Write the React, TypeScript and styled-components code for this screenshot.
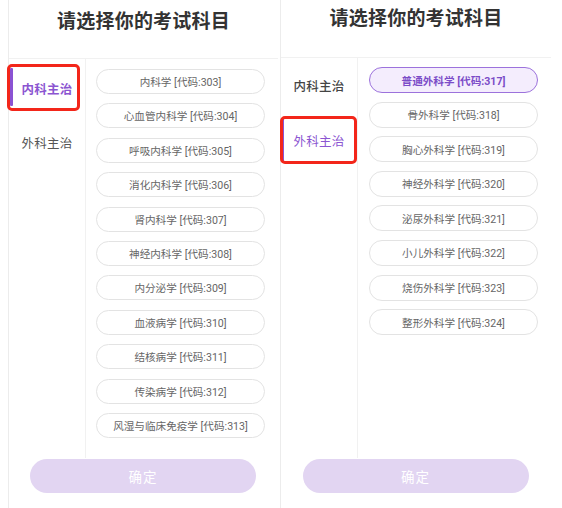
import React from "react";
import styled, { createGlobalStyle } from "styled-components";

const Global = createGlobalStyle`
  html, body { margin: 0; padding: 0; background: #ffffff; }
  body { font-family: Roboto, "Noto Sans CJK SC", "Noto Sans", sans-serif; }
  * { box-sizing: border-box; }
`;

const Page = styled.div`
  display: flex;
  width: 562px;
  height: 508px;
  overflow: hidden;
  background: #fff;
`;

const Panel = styled.div<{ $ml: number; $w: number }>`
  margin-left: ${(p) => p.$ml}px;
  width: ${(p) => p.$w}px;
  height: 508px;
  border-left: 1px solid #ececec;
  display: flex;
  flex-direction: column;
  background: #fff;
`;

const Header = styled.div<{ $h: number; $pt: number }>`
  height: ${(p) => p.$h}px;
  padding-top: ${(p) => p.$pt}px;
  border-bottom: 1px solid #f1f1f1;
  text-align: center;
  flex: none;
`;

const Title = styled.h1`
  margin: 0;
  font-size: 19px;
  line-height: 26px;
  font-weight: 700;
  color: #333;
  letter-spacing: 0.2px;
`;

const Body = styled.div<{ $h: number }>`
  display: flex;
  height: ${(p) => p.$h}px;
  flex: none;
`;

const Nav = styled.div<{ $pt: number }>`
  width: 77px;
  flex: none;
  padding-top: ${(p) => p.$pt}px;
  border-right: 1px solid #f1f1f1;
  display: flex;
  flex-direction: column;
`;

const NavItem = styled.div<{
  $h: number;
  $active: boolean;
  $activeWeight: number;
  $idleWeight: number;
  $idleColor: string;
}>`
  position: relative;
  height: ${(p) => p.$h}px;
  display: flex;
  align-items: center;
  justify-content: center;
  font-size: 12.5px;
  letter-spacing: 0.3px;
  color: ${(p) => (p.$active ? "#8b55d1" : p.$idleColor)};
  font-weight: ${(p) => (p.$active ? p.$activeWeight : p.$idleWeight)};
`;

const ActiveBar = styled.span<{ $w: number; $top: number; $bottom: number }>`
  position: absolute;
  left: 1px;
  top: ${(p) => p.$top}px;
  bottom: ${(p) => p.$bottom}px;
  width: ${(p) => p.$w}px;
  background: #8a52d3;
  border-radius: 1px;
`;

const Highlight = styled.span<{ $l: number; $t: number; $w: number; $h: number }>`
  position: absolute;
  left: ${(p) => p.$l}px;
  top: ${(p) => p.$t}px;
  width: ${(p) => p.$w}px;
  height: ${(p) => p.$h}px;
  border: 3px solid #f3261a;
  border-radius: 5px;
  pointer-events: none;
`;

const List = styled.div<{ $pt: number; $pl: number; $pr: number; $gap: number; $h: number }>`
  flex: 1;
  height: ${(p) => p.$h}px;
  overflow: hidden;
  padding: ${(p) => p.$pt}px ${(p) => p.$pr}px 0 ${(p) => p.$pl}px;
  display: flex;
  flex-direction: column;
  gap: ${(p) => p.$gap}px;
`;

const Pill = styled.div<{ $h: number; $active: boolean }>`
  flex: none;
  height: ${(p) => p.$h}px;
  border-radius: ${(p) => p.$h / 2}px;
  border: 1px solid ${(p) => (p.$active ? "#9c72dc" : "#e3e3e3")};
  background: ${(p) => (p.$active ? "#f4edfd" : "#ffffff")};
  color: ${(p) => (p.$active ? "#7b4cc8" : "#666")};
  font-weight: ${(p) => (p.$active ? 700 : 400)};
  font-size: 10.6px;
  display: flex;
  align-items: center;
  justify-content: center;
  white-space: nowrap;
`;

const Footer = styled.div<{ $pt: number; $offset: number }>`
  padding-top: ${(p) => p.$pt}px;
  display: flex;
  justify-content: center;
  padding-right: ${(p) => p.$offset}px;
`;

const ConfirmButton = styled.button`
  width: 226px;
  height: 34px;
  border: none;
  border-radius: 17px;
  background: #e2d5f2;
  color: #ffffff;
  font-family: Roboto, "Noto Sans CJK SC", sans-serif;
  font-size: 13.5px;
  letter-spacing: 1px;
  padding: 0;
`;

type Config = {
  ml: number;
  w: number;
  headerH: number;
  titlePt: number;
  bodyH: number;
  navPt: number;
  navItemH: number;
  activeNav: number;
  activeWeight: number;
  idleWeight: number;
  idleColor: string;
  bar: { w: number; top: number; bottom: number };
  box: { l: number; t: number; w: number; h: number };
  list: { pt: number; pl: number; pr: number; gap: number; h: number; pillH: number };
  items: string[];
  activeItem: number;
  footerPt: number;
  footerOffset: number;
};

const navLabels = ["内科主治", "外科主治"];

const left: Config = {
  ml: 8,
  w: 270,
  headerH: 59,
  titlePt: 9,
  bodyH: 399,
  navPt: 2,
  navItemH: 54,
  activeNav: 0,
  activeWeight: 700,
  idleWeight: 400,
  idleColor: "#555",
  bar: { w: 3, top: 7, bottom: 9 },
  box: { l: -2, t: 3, w: 73, h: 47 },
  list: { pt: 10, pl: 10, pr: 13, gap: 9.4, h: 379, pillH: 25 },
  items: [
    "内科学 [代码:303]",
    "心血管内科学 [代码:304]",
    "呼吸内科学 [代码:305]",
    "消化内科学 [代码:306]",
    "肾内科学 [代码:307]",
    "神经内科学 [代码:308]",
    "内分泌学 [代码:309]",
    "血液病学 [代码:310]",
    "结核病学 [代码:311]",
    "传染病学 [代码:312]",
    "风湿与临床免疫学 [代码:313]",
  ],
  activeItem: -1,
  footerPt: 1,
  footerOffset: 1,
};

const right: Config = {
  ml: 2,
  w: 271,
  headerH: 58,
  titlePt: 6,
  bodyH: 400,
  navPt: 0,
  navItemH: 55,
  activeNav: 1,
  activeWeight: 400,
  idleWeight: 500,
  idleColor: "#444",
  bar: { w: 1.5, top: 5, bottom: 6 },
  box: { l: -1, t: 3, w: 77, h: 48 },
  list: { pt: 9, pl: 11, pr: 13, gap: 8.6, h: 400, pillH: 26 },
  items: [
    "普通外科学 [代码:317]",
    "骨外科学 [代码:318]",
    "胸心外科学 [代码:319]",
    "神经外科学 [代码:320]",
    "泌尿外科学 [代码:321]",
    "小儿外科学 [代码:322]",
    "烧伤外科学 [代码:323]",
    "整形外科学 [代码:324]",
  ],
  activeItem: 0,
  footerPt: 1,
  footerOffset: 1,
};

function SubjectPanel({ c }: { c: Config }) {
  return (
    <Panel $ml={c.ml} $w={c.w}>
      <Header $h={c.headerH} $pt={c.titlePt}>
        <Title>请选择你的考试科目</Title>
      </Header>
      <Body $h={c.bodyH}>
        <Nav $pt={c.navPt}>
          {navLabels.map((label, i) => (
            <NavItem
              key={label}
              $h={c.navItemH}
              $active={i === c.activeNav}
              $activeWeight={c.activeWeight}
              $idleWeight={c.idleWeight}
              $idleColor={c.idleColor}
            >
              {i === c.activeNav && (
                <>
                  <ActiveBar $w={c.bar.w} $top={c.bar.top} $bottom={c.bar.bottom} />
                  <Highlight $l={c.box.l} $t={c.box.t} $w={c.box.w} $h={c.box.h} />
                </>
              )}
              {label}
            </NavItem>
          ))}
        </Nav>
        <List
          $pt={c.list.pt}
          $pl={c.list.pl}
          $pr={c.list.pr}
          $gap={c.list.gap}
          $h={c.list.h}
        >
          {c.items.map((item, i) => (
            <Pill key={item} $h={c.list.pillH} $active={i === c.activeItem}>
              {item}
            </Pill>
          ))}
        </List>
      </Body>
      <Footer $pt={c.footerPt} $offset={c.footerOffset}>
        <ConfirmButton>确定</ConfirmButton>
      </Footer>
    </Panel>
  );
}

export default function App() {
  return (
    <>
      <Global />
      <Page>
        <SubjectPanel c={left} />
        <SubjectPanel c={right} />
      </Page>
    </>
  );
}
